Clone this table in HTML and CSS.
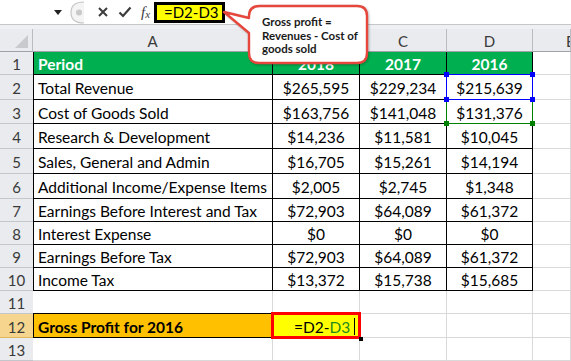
FILE: index.html
```html
<!DOCTYPE html>
<html lang="en">
<head>
    <meta charset="UTF-8">
    <meta name="viewport" content="width=device-width, initial-scale=1.0">
    <title>Gross Profit - Excel</title>
    <link rel="stylesheet" href="styles.css">
</head>
<body>
    <div class="window">
        <div class="formula-bar">
            <div class="name-box">
                <svg class="drop" width="8" height="5" viewBox="0 0 8 5"><path d="M0 0 H8 L4 5 Z" fill="#222"/></svg>
            </div>
            <svg class="grip" width="18" height="25" viewBox="0 0 18 25">
                <path d="M16 2 Q3 2 3 12.5 Q3 23 16 23" fill="#f4f4f4" stroke="#c4c4c4" stroke-width="1.2"/>
                <circle cx="11" cy="12.5" r="3" fill="#c9c9c9"/>
            </svg>
            <div class="fb-buttons">
                <svg width="12" height="12" viewBox="0 0 12 12"><path d="M2 2 L10 10 M10 2 L2 10" stroke="#3c3c3c" stroke-width="2"/></svg>
                <svg width="14" height="12" viewBox="0 0 14 12"><path d="M1.5 6.5 L5 10 L12.5 1.5" stroke="#3c3c3c" stroke-width="2.2" fill="none"/></svg>
                <span class="fx"><i>f</i><sub>x</sub></span>
            </div>
            <div class="formula-input">=D2-D3</div>
        </div>

        <div class="strip"></div>

        <div class="sheet">
            <div class="cell corner"><span class="tri"></span></div>
            <div class="cell hdr">A</div>
            <div class="cell hdr">B</div>
            <div class="cell hdr">C</div>
            <div class="cell hdr">D</div>
            <div class="cell hdr last">E</div>

            <div class="cell rh">1</div>
            <div class="cell t first green">Period</div>
            <div class="cell t num green">2018</div>
            <div class="cell t num green">2017</div>
            <div class="cell t num green">2016</div>
            <div class="cell"></div>

            <div class="cell rh">2</div>
            <div class="cell t first">Total Revenue</div>
            <div class="cell t num">$265,595</div>
            <div class="cell t num">$229,234</div>
            <div class="cell t num ref ref-blue">$215,639
                <i class="handle tl"></i><i class="handle tr"></i><i class="handle bl"></i><i class="handle br"></i>
            </div>
            <div class="cell"></div>

            <div class="cell rh">3</div>
            <div class="cell t first">Cost of Goods Sold</div>
            <div class="cell t num">$163,756</div>
            <div class="cell t num">$141,048</div>
            <div class="cell t num ref ref-green">$131,376
                <i class="handle bl"></i><i class="handle br"></i>
            </div>
            <div class="cell"></div>

            <div class="cell rh">4</div>
            <div class="cell t first">Research &amp; Development</div>
            <div class="cell t num">$14,236</div>
            <div class="cell t num">$11,581</div>
            <div class="cell t num">$10,045</div>
            <div class="cell"></div>

            <div class="cell rh">5</div>
            <div class="cell t first">Sales, General and Admin</div>
            <div class="cell t num">$16,705</div>
            <div class="cell t num">$15,261</div>
            <div class="cell t num">$14,194</div>
            <div class="cell"></div>

            <div class="cell rh">6</div>
            <div class="cell t first">Additional Income/Expense Items</div>
            <div class="cell t num">$2,005</div>
            <div class="cell t num">$2,745</div>
            <div class="cell t num">$1,348</div>
            <div class="cell"></div>

            <div class="cell rh">7</div>
            <div class="cell t first">Earnings Before Interest and Tax</div>
            <div class="cell t num">$72,903</div>
            <div class="cell t num">$64,089</div>
            <div class="cell t num">$61,372</div>
            <div class="cell"></div>

            <div class="cell rh">8</div>
            <div class="cell t first">Interest Expense</div>
            <div class="cell t num">$0</div>
            <div class="cell t num">$0</div>
            <div class="cell t num">$0</div>
            <div class="cell"></div>

            <div class="cell rh">9</div>
            <div class="cell t first">Earnings Before Tax</div>
            <div class="cell t num">$72,903</div>
            <div class="cell t num">$64,089</div>
            <div class="cell t num">$61,372</div>
            <div class="cell"></div>

            <div class="cell rh">10</div>
            <div class="cell t first">Income Tax</div>
            <div class="cell t num">$13,372</div>
            <div class="cell t num">$15,738</div>
            <div class="cell t num">$15,685</div>
            <div class="cell"></div>

            <div class="cell rh">11</div>
            <div class="cell"></div>
            <div class="cell"></div>
            <div class="cell"></div>
            <div class="cell"></div>
            <div class="cell"></div>

            <div class="cell rh active">12</div>
            <div class="cell t first orange">Gross Profit for 2016</div>
            <div class="cell edit"><span class="d2">=D2-</span><span class="d3">D3</span><span class="caret"></span></div>
            <div class="cell"></div>
            <div class="cell"></div>
            <div class="cell"></div>

            <div class="cell rh">13</div>
            <div class="cell"></div>
            <div class="cell"></div>
            <div class="cell"></div>
            <div class="cell"></div>
            <div class="cell"></div>
        </div>

        <!-- callout over the formula bar -->
        <div class="callout">
            <svg class="callout-shape" width="152" height="70" viewBox="0 0 152 70">
                <path d="M40 6 H137 Q147 6 147 16 V53 Q147 63 137 63 H39 Q29 63 29 53 V33 L4 12 L29 18 V16 Q29 6 40 6 Z"
                      fill="#fff" stroke="#e5473c" stroke-width="2.4" stroke-linejoin="round"/>
            </svg>
            <div class="callout-text">Gross profit =<br>Revenues - Cost of<br>goods sold</div>
        </div>
    </div>
</body>
</html>
```

FILE: styles.css
```css
body {
    margin: 0;
    padding: 0;
    background: #fff;
    font-family: Lato, "Liberation Sans", sans-serif;
    color: #000;
}

.window {
    position: relative;
    width: 571px;
    height: 361px;
    overflow: hidden;
}

/* formula bar */
.formula-bar {
    height: 25px;
    display: flex;
    align-items: center;
    background: #fff;
    border-bottom: 1px solid #c6c6c6;
    box-sizing: border-box;
}

.name-box {
    width: 68px;
    height: 100%;
    display: flex;
    align-items: center;
    justify-content: flex-end;
    padding-right: 6px;
    box-sizing: border-box;
}

.grip {
    display: block;
}

.fb-buttons {
    display: flex;
    align-items: center;
    gap: 9px;
    margin-left: 11px;
    width: 60px;
}

.fb-buttons svg {
    display: block;
}

.fx {
    font-family: "Liberation Serif", serif;
    font-size: 15px;
    color: #3c3c3c;
    line-height: 1;
}

.fx sub {
    font-size: 11px;
    vertical-align: -1px;
    font-style: italic;
}

.formula-input {
    height: 21px;
    width: 71px;
    box-sizing: border-box;
    border: 3px solid #000;
    background: #ffff00;
    font-size: 15px;
    line-height: 15px;
    padding-left: 7px;
    margin-left: -3px;
}

.strip {
    height: 4px;
    background: #eef0f3;
}

/* sheet grid */
.sheet {
    display: grid;
    grid-template-columns: 33px 240px 87px 87px 86px 1fr;
    grid-template-rows: 23px 23px 25px 24px 25px 25px 25px 23px 23px 23px 23px 23px 24px 23px;
}

.cell {
    box-sizing: border-box;
    border-right: 1px solid #d9d9d9;
    border-bottom: 1px solid #d9d9d9;
    display: flex;
    align-items: center;
    padding: 2px 4px 0;
    font-size: 15.5px;
    white-space: nowrap;
    overflow: hidden;
}

.corner {
    position: relative;
    background: #e9ebee;
    border-right: 1px solid #b9bcc1;
    border-bottom: 1px solid #9ea2a8;
}

.tri {
    position: absolute;
    right: 4px;
    bottom: 3px;
    width: 0;
    height: 0;
    border-left: 13px solid transparent;
    border-bottom: 13px solid #c8cacd;
}

.hdr {
    background: #e9ebee;
    border-right: 1px solid #b9bcc1;
    border-bottom: 1px solid #9ea2a8;
    justify-content: center;
    color: #3a3a3a;
    font-size: 15px;
}

.hdr.last {
    justify-content: flex-start;
    padding-left: 33px;
}

.rh {
    background: #e9ebee;
    border-right: none;
    border-bottom: 1px solid #c3c6cb;
    justify-content: center;
    color: #3a3a3a;
    font-size: 15px;
    padding: 2px 0 0;
}

.rh.active {
    background: #f6d68f;
    border-bottom-color: #e0b55a;
}

.t {
    border-right-color: #000;
    border-bottom-color: #000;
}

.t.first {
    border-left: 1px solid #000;
}

.num {
    justify-content: center;
}

.green {
    background: #00b050;
    color: #fff;
    font-weight: bold;
}

.orange {
    background: #ffc000;
    font-weight: bold;
    border-top: 1px solid #000;
    margin-top: -1px;
}

/* referenced cells while editing */
.ref {
    position: relative;
    overflow: visible;
}

.ref::after {
    content: "";
    position: absolute;
    left: -1px;
    top: -1px;
    right: -1px;
    bottom: -1px;
    border: 1px solid;
}

.ref-blue::after {
    border-color: #0000ff;
    z-index: 2;
}

.ref-green::after {
    border-color: #008000;
    z-index: 1;
}

.handle {
    position: absolute;
    width: 5px;
    height: 5px;
    z-index: 3;
}

.ref-blue .handle { background: #0000ff; }
.ref-green .handle { background: #008000; }

.handle.tl { left: -3px; top: -3px; }
.handle.tr { right: -3px; top: -3px; }
.handle.bl { left: -3px; bottom: -3px; }
.handle.br { right: -3px; bottom: -3px; }

/* cell in edit mode */
.edit {
    position: relative;
    overflow: visible;
    background: #ffff00;
    padding-left: 21px;
    z-index: 2;
}

.edit::before {
    content: "";
    position: absolute;
    left: -2px;
    top: -2px;
    right: -2px;
    bottom: -2px;
    border: 3px solid #ff0000;
}

.edit::after {
    content: "";
    position: absolute;
    right: -4px;
    bottom: -4px;
    width: 4px;
    height: 4px;
    background: #000;
}

.d2 { color: #000; }
.d3 { color: #1e8a1e; }

.caret {
    display: inline-block;
    width: 1px;
    height: 17px;
    background: #000;
    margin-left: 4px;
}

/* callout */
.callout {
    position: absolute;
    left: 220px;
    top: 0;
    width: 152px;
    height: 70px;
}

.callout-shape {
    display: block;
    filter: drop-shadow(1px 1px 1px rgba(0, 0, 0, 0.25));
}

.callout-text {
    position: absolute;
    left: 42px;
    top: 15px;
    font-size: 11.5px;
    line-height: 13.5px;
    font-weight: bold;
    color: #1a1a1a;
}
```
